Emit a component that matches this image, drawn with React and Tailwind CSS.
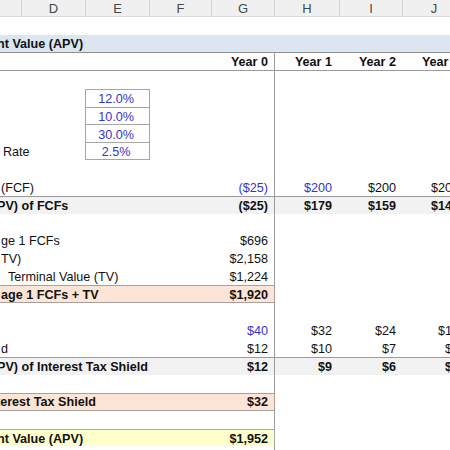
import React from 'react';

const BLUE = 'text-[#3434cf]';
const cols = ['w-[63px]', 'w-[65px]', 'w-[63px]', 'w-[63px]'];
const pads = ['pr-[6px]', 'pr-[8px]', 'pr-[7px]', 'pr-[7px]'];

function Row({ label, indent = '', bold = false, vals = [], blue = [], band = 'none', divider = true }) {
  const rowStyle =
    band === 'apv'
      ? 'bg-[#dce6f1] border-b border-[#8f8f8f]'
      : band === 'year'
      ? 'border-b border-[#9a9a9a]'
      : band === 'pv'
      ? 'bg-[#f2f2f2] border-t border-[#9a9a9a]'
      : '';
  const leftStyle =
    band === 'orange'
      ? 'bg-[#fce4d6] border-y border-[#aaa09b]'
      : band === 'yellow'
      ? 'bg-[#ffffcc] border-t border-[#a8a8a8]'
      : '';

  return (
    <div className={`flex h-[17.9px] shrink-0 ${rowStyle} ${bold ? 'font-bold' : ''}`}>
      <div className={`w-[212px] shrink-0 overflow-hidden flex items-center pt-[2px] whitespace-nowrap ${leftStyle}`}>
        <span className={indent}>{label}</span>
      </div>
      {[0, 1, 2, 3].map((k) => (
        <div
          key={k}
          className={`${cols[k]} ${pads[k]} shrink-0 flex items-center justify-end pt-[2px] whitespace-nowrap ${
            k === 0 && divider ? 'border-r border-[#9a9a9a]' : ''
          } ${k === 0 ? leftStyle : ''} ${blue[k] ? BLUE : ''}`}
        >
          {vals[k]}
        </div>
      ))}
    </div>
  );
}

function InputRow({ label, value, last }) {
  return (
    <div className="flex h-[17.9px] shrink-0">
      <div className="w-[85px] shrink-0 flex items-center pt-[2px] pl-[3px]">{label}</div>
      <div
        className={`w-[65px] shrink-0 flex items-center justify-center pr-[3px] pt-[2px] border-x border-t border-[#a6a6a6] ${
          last ? 'border-b' : ''
        } ${BLUE}`}
      >
        {value}
      </div>
      <div className="w-[62px] shrink-0" />
      <div className="w-[63px] shrink-0 border-r border-[#9a9a9a]" />
    </div>
  );
}

const headers = [
  ['', 'w-[22px]'],
  ['D', 'w-[64px]'],
  ['E', 'w-[64px]'],
  ['F', 'w-[62px]'],
  ['G', 'w-[63px]'],
  ['H', 'w-[65px]'],
  ['I', 'w-[63px]'],
  ['J', 'w-[63px]'],
];

export default function App() {
  return (
    <div className="w-[450px] h-[450px] overflow-hidden bg-white text-[#111] text-[12.6px] leading-none font-['Liberation_Sans',Arial,sans-serif] flex flex-col">
      <div className="flex h-[17px] shrink-0 bg-[#f0f0f0] border-b border-[#dcdcdc]">
        {headers.map(([l, w], i) => (
          <div
            key={i}
            className={`${w} shrink-0 flex items-center justify-center text-[13px] text-[#474747] border-r border-[#d2d2d2]`}
          >
            {l}
          </div>
        ))}
      </div>
      <div className="h-[18px] shrink-0" />

      <Row band="apv" bold divider={false} label="nt Value (APV)" indent="-ml-[3px]" />
      <Row band="year" bold vals={['Year 0', 'Year 1', 'Year 2', 'Year 3']} />
      <Row />
      <InputRow value="12.0%" />
      <InputRow value="10.0%" />
      <InputRow value="30.0%" />
      <InputRow value="2.5%" label="Rate" last />
      <Row />
      <Row label="(FCF)" indent="ml-[1px]" vals={['($25)', '$200', '$200', '$200']} blue={[true, true]} />
      <Row band="pv" bold label="PV) of FCFs" indent="-ml-[3px]" vals={['($25)', '$179', '$159', '$142']} />
      <Row />
      <Row label="ge 1 FCFs" indent="ml-[1px]" vals={['$696']} />
      <Row label="TV)" indent="ml-[1px]" vals={['$2,158']} />
      <Row label="Terminal Value (TV)" indent="ml-[8px]" vals={['$1,224']} />
      <Row band="orange" bold label="age 1 FCFs + TV" indent="ml-[1px]" vals={['$1,920']} />
      <Row />
      <Row vals={['$40', '$32', '$24', '$16']} blue={[true]} />
      <Row label="d" indent="ml-[1px]" vals={['$12', '$10', '$7', '$5']} />
      <Row band="pv" bold label="PV) of Interest Tax Shield" indent="-ml-[3px]" vals={['$12', '$9', '$6', '$4']} />
      <Row />
      <Row band="orange" bold label="terest Tax Shield" indent="-ml-[4px]" vals={['$32']} />
      <Row />
      <Row band="yellow" bold label="nt Value (APV)" indent="-ml-[3px]" vals={['$1,952']} />
      <Row />
    </div>
  );
}
